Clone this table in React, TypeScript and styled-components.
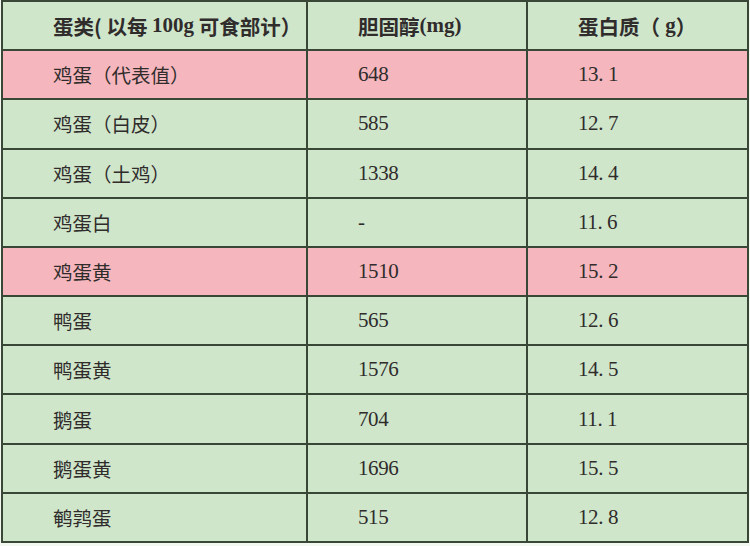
import React from 'react'
import styled, { createGlobalStyle } from 'styled-components'

const GlobalStyle = createGlobalStyle`
	html, body {
		margin: 0;
		padding: 0;
		background: #f3f8f1;
	}
`

const Table = styled.div`
	margin-left: 1px;
	width: 748px;
	height: 543px;
	box-sizing: border-box;
	padding: 2px;
	display: grid;
	grid-template-columns: 303px 218px 219px;
	grid-template-rows: repeat(11, 1fr);
	gap: 2px;
	background: #394737;
`

const Cell = styled.div<{ $pink?: boolean; $head?: boolean; $num?: boolean }>`
	display: flex;
	align-items: center;
	padding-left: 50px;
	background: ${props => (props.$pink ? '#f5b7bd' : '#cfe6cb')};
	color: #302c2c;
	font-family: ${props =>
		props.$num
			? '"Liberation Serif", "Noto Sans CJK SC", serif'
			: '"Noto Sans CJK SC", sans-serif'};
	font-size: ${props => (props.$num ? '21px' : props.$head ? '20.5px' : '19.5px')};
	font-weight: ${props => (props.$head ? 700 : 400)};
	letter-spacing: ${props => (props.$num ? '-0.4px' : '0')};
	white-space: nowrap;
	overflow: hidden;
`

// latin bits of the header are set in a serif, like the original sheet
const Latin = styled.span`
	font-family: "Liberation Serif", serif;
	font-weight: 700;
	font-size: 21px;
`

const rows: [string, string, string, boolean][] = [
	['鸡蛋（代表值）', '648', '13.1', true],
	['鸡蛋（白皮）', '585', '12.7', false],
	['鸡蛋（土鸡）', '1338', '14.4', false],
	['鸡蛋白', '-', '11.6', false],
	['鸡蛋黄', '1510', '15.2', true],
	['鸭蛋', '565', '12.6', false],
	['鸭蛋黄', '1576', '14.5', false],
	['鹅蛋', '704', '11.1', false],
	['鹅蛋黄', '1696', '15.5', false],
	['鹌鹑蛋', '515', '12.8', false],
]

const App = () => {
	return (
		<>
			<GlobalStyle />
			<Table>
				<Cell $head>
					蛋类(&nbsp;以每&nbsp;<Latin>100g</Latin>&nbsp;可食部计）
				</Cell>
				<Cell $head>
					胆固醇<Latin>(mg)</Latin>
				</Cell>
				<Cell $head>
					蛋白质（<Latin>&nbsp;g</Latin>）
				</Cell>
				{rows.map(([name, chol, protein, pink]) => (
					<React.Fragment key={name}>
						<Cell $pink={pink}>{name}</Cell>
						<Cell $pink={pink} $num>{chol}</Cell>
						<Cell $pink={pink} $num>{protein.replace('.', '. ')}</Cell>
					</React.Fragment>
				))}
			</Table>
		</>
	)
}

export default App
